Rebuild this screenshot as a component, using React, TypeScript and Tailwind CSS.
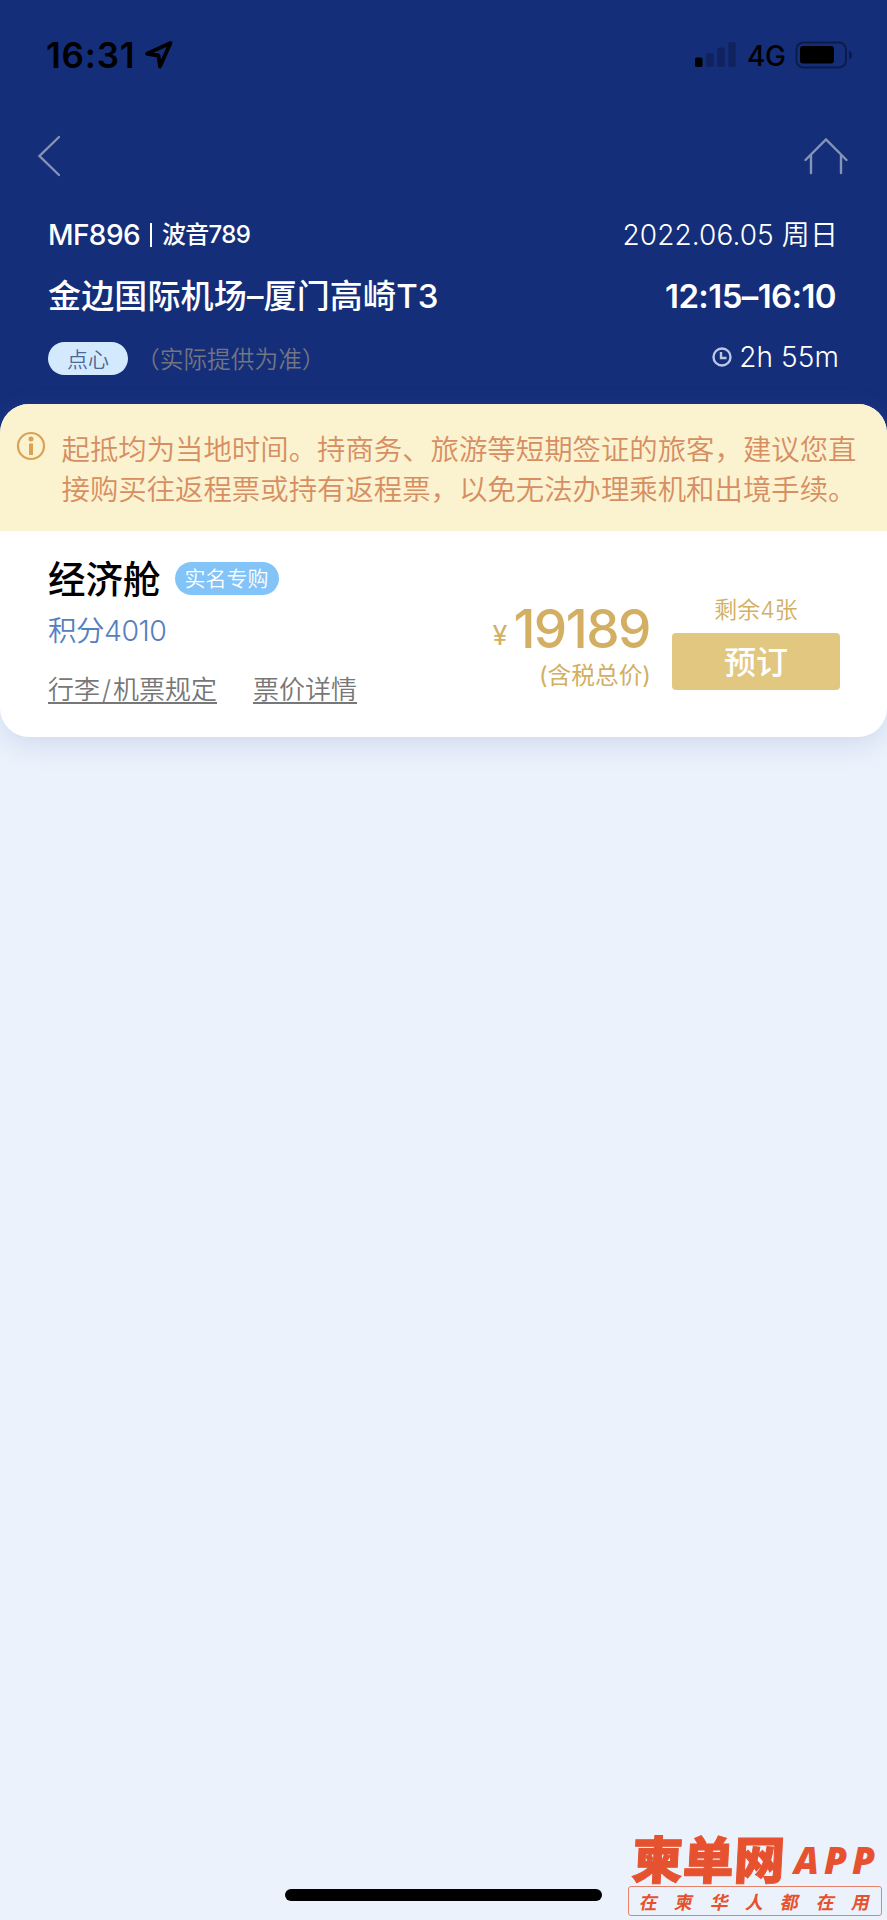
import type { ReactNode } from 'react'

const notice = [
  '起抵均为当地时间。持商务、旅游等短期签证的旅客，建议您直',
  '接购买往返程票或持有返程票，以免无法办理乘机和出境手续。',
]

function StatusBar() {
  return (
    <div className="flex h-[110px] items-center justify-between pl-[46px] pr-[34px] text-black">
      <div className="flex items-center gap-[9px]">
        <span className="text-[35px] leading-none font-semibold tracking-[0.8px]">16:31</span>
        <svg width="30" height="30" viewBox="0 0 30 30" fill="none" stroke="currentColor" strokeWidth="3.800" strokeLinejoin="round">
          <path d="M26.500 3 3 13.800 14.500 15.500 16 26.500Z" />
        </svg>
      </div>
      <div className="flex items-center">
        <svg width="42" height="26" viewBox="0 0 42 26" fill="currentColor">
          <rect x="0" y="15.5" width="7.5" height="9.5" rx="1.8" />
          <rect x="11.2" y="11" width="7.5" height="14" rx="1.8" opacity="0.22" />
          <rect x="22.2" y="5.5" width="7.5" height="19.5" rx="1.8" opacity="0.22" />
          <rect x="33.3" y="0" width="7.5" height="25" rx="1.8" opacity="0.22" />
        </svg>
        <span className="ml-[10px] w-[38px] pt-[2px] text-[28px] leading-none font-medium tracking-[-0.5px]">4G</span>
        <svg className="ml-[10px]" width="58" height="28" viewBox="0 0 58 28" fill="currentColor">
          <rect x="1.4" y="1.4" width="49.6" height="25" rx="7" fill="none" stroke="currentColor" strokeWidth="2" opacity="0.4" />
          <rect x="5" y="5" width="34" height="17.5" rx="3" />
          <path d="M54 9.5c4 1.500 4 7.500 0 9Z" opacity="0.4" />
        </svg>
      </div>
    </div>
  )
}

function NavBar() {
  return (
    <div className="flex h-[92px] items-center justify-between pl-[37px] pr-[39px] text-[#8494b6]">
      <svg width="24" height="42" viewBox="0 0 24 42" fill="none" stroke="currentColor" strokeWidth="2.400" strokeLinecap="round">
        <path d="M22 2 2.500 21 22 40" />
      </svg>
      <svg width="44" height="38" viewBox="0 0 44 38" fill="none" stroke="currentColor" strokeWidth="2.400" strokeLinecap="round">
        <path d="M1.500 23 22 2.500 42.500 23M7 18v18M37 18v18" />
      </svg>
    </div>
  )
}

function RuleLink({ children }: { children: ReactNode }) {
  return <a className="h-[32px] border-b-2 border-[#777] leading-[35px]">{children}</a>
}

function FlightHeader() {
  return (
    <div className="flex h-[202px] flex-col pl-[48px] pr-[48px] text-white">
      <div className="flex h-[64px] items-center justify-between pt-[2px]">
        <div className="flex items-center font-medium">
          <span className="text-[28px] tracking-[-0.6px]">MF896</span>
          <span className="ml-[10px] h-[24px] w-[2px] bg-white" />
          <span className="ml-[10px] text-[24px] tracking-[-0.700px]">波音789</span>
        </div>
        <span className="mr-[1px] text-[28px] font-[350] tracking-[0.1px]">2022.06.05 周日</span>
      </div>
      <div className="flex h-[60px] items-center justify-between pt-[2px]">
        <span className="text-[33px] font-medium tracking-[0.15px]">金边国际机场–厦门高崎T3</span>
        <span className="mr-[3px] text-[33px] font-semibold tracking-[-0.600px]">12:15–16:10</span>
      </div>
      <div className="flex h-[66px] items-center justify-between">
        <div className="flex items-center font-[350]">
          <span className="flex h-[33px] w-[80px] items-center justify-center rounded-full bg-[#d3eafe] pt-[2px] text-[21px] text-[#4b6793]">点心</span>
          <span className="ml-[8px] pt-[2px] text-[23.700px] text-[#737580]">（实际提供为准）</span>
        </div>
        <div className="-mt-[5px] flex items-center">
          <svg width="20" height="20" viewBox="0 0 20 20" fill="none" stroke="#bcc7e6" strokeWidth="2.400">
            <circle cx="10" cy="10" r="8.500" />
            <path d="M9 5v6h5.500" />
          </svg>
          <span className="ml-[7px] text-[28px] font-[350] tracking-[0.1px]">2h 55m</span>
        </div>
      </div>
    </div>
  )
}

function FareCard() {
  return (
    <div className="overflow-hidden rounded-[29px] bg-white shadow-[0_8px_26px_rgba(110,130,185,0.2)]">
      <div className="flex h-[127px] bg-[#fbf2cf] pl-[16px]">
        <svg className="mt-[27px]" width="30" height="30" viewBox="0 0 30 30" fill="none" stroke="#d9a356" strokeWidth="2.200">
          <circle cx="15" cy="15" r="13" />
          <circle cx="15" cy="8" r="2.500" fill="#d9a356" stroke="none" />
          <path d="M15 12.500v11.500" strokeWidth="4" />
        </svg>
        <div className="ml-[15.500px] mt-[26px] text-[28.400px] leading-[39.500px] font-[350] whitespace-nowrap text-[#d68e62]">
          {notice.map((line) => (
            <p key={line}>{line}</p>
          ))}
        </div>
      </div>
      <div className="flex h-[206px] justify-between pl-[48px] pr-[47px]">
        <div className="flex flex-col pt-[22px]">
          <div className="flex h-[50px] items-center">
            <span className="pt-[4px] text-[37.500px] font-medium text-black">经济舱</span>
            <span className="ml-[14px] flex h-[33px] w-[104px] items-center justify-center rounded-full bg-[#83c4f8] pt-[2px] text-[21px] font-[350] text-white">
              实名专购
            </span>
          </div>
          <span className="mt-[10px] text-[28.500px] leading-[36px] font-[350] tracking-[-0.500px] text-[#5480be]">积分4010</span>
          <div className="mt-[23px] flex gap-[36px] text-[26px] font-[350] text-[#777]">
            <RuleLink>
              行李<span className="px-[2px]">/</span>机票规定
            </RuleLink>
            <RuleLink>票价详情</RuleLink>
          </div>
        </div>
        <div className="flex text-[#d2af62]">
          <div className="flex flex-col items-end pt-[66px]">
            <div className="mr-[1px] flex h-[64px] items-center">
              <span className="pt-[12px] text-[27px] leading-none">¥</span>
              <span className="ml-[6px] text-[53px] leading-none font-medium tracking-[-1.500px]">19189</span>
            </div>
            <span className="text-[23.700px] leading-[30px]">(含税总价)</span>
          </div>
          <div className="ml-[21px] flex w-[168px] flex-col items-center pt-[64px]">
            <span className="h-[38px] text-[23px] leading-[31px] font-[350]">剩余4张</span>
            <button className="h-[57px] w-full rounded-[4px] bg-[#e1c77f] pt-[2px] text-[32px] leading-none font-medium text-white">预订</button>
          </div>
        </div>
      </div>
    </div>
  )
}

function Watermark() {
  return (
    <div className="absolute right-[5px] bottom-[4px] w-[254px] text-[#e6522f]">
      <div className="flex h-[52px] items-center pl-[4px]">
        <span className="-skew-x-3 text-[51px] leading-none font-black [-webkit-text-stroke:1px_#e6522f]">柬单网</span>
        <span className="ml-[9px] pb-[1px] text-[37px] leading-none font-extrabold tracking-[5px] italic font-['Open_Sans',sans-serif]">APP</span>
      </div>
      <div className="flex h-[30px] items-center justify-between rounded-[3px] border border-[#e6826a] px-[11px] pt-[3px] text-[18px] font-bold">
        {[...'在柬华人都在用'].map((char, i) => (
          <span key={i} className="-skew-x-12 leading-none">{char}</span>
        ))}
      </div>
    </div>
  )
}

export default function App() {
  return (
    <div className="relative h-[1920px] w-[887px] overflow-hidden bg-[#ebf2fc] font-['Inter','Noto_Sans_CJK_SC',sans-serif]">
      <div className="h-[460px] bg-[#152e7a]">
        <StatusBar />
        <NavBar />
        <FlightHeader />
        <FareCard />
      </div>
      <div className="absolute bottom-[19px] left-[285px] h-[12px] w-[317px] rounded-full bg-black" />
      <Watermark />
    </div>
  )
}
